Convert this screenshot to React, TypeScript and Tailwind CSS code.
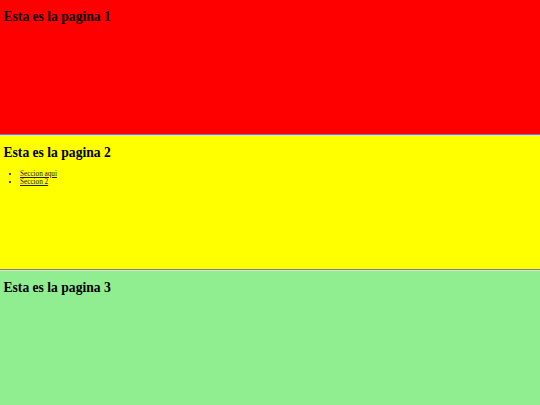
const pages = [
  { title: "Esta es la pagina 1", bg: "bg-[#ff0000]" },
  { title: "Esta es la pagina 2", bg: "bg-[#ffff00]", links: ["Seccion aqui", "Seccion 2"] },
  { title: "Esta es la pagina 3", bg: "bg-[#90ee90]" },
];

function Rule() {
  return <div className="h-0 border-t border-b border-t-[#808080] border-b-[#dddddd]" />;
}

export default function App() {
  return (
    <div className="font-['Liberation_Serif',serif] text-black">
      {pages.map((page, i) => (
        <div key={page.title}>
          {i > 0 && <Rule />}
          <section className={`h-[33vh] overflow-hidden px-[3.5px] ${page.bg}`}>
            <h1 className="mt-[9px] text-[13.6px] font-bold leading-[16px]">{page.title}</h1>
            {page.links && (
              <ul className="mt-[9px] list-disc pl-[16.5px] text-[7.2px] leading-[8px]">
                {page.links.map((link) => (
                  <li key={link}>
                    <a href="#" className="text-[#222] underline">
                      {link}
                    </a>
                  </li>
                ))}
              </ul>
            )}
          </section>
        </div>
      ))}
    </div>
  );
}
